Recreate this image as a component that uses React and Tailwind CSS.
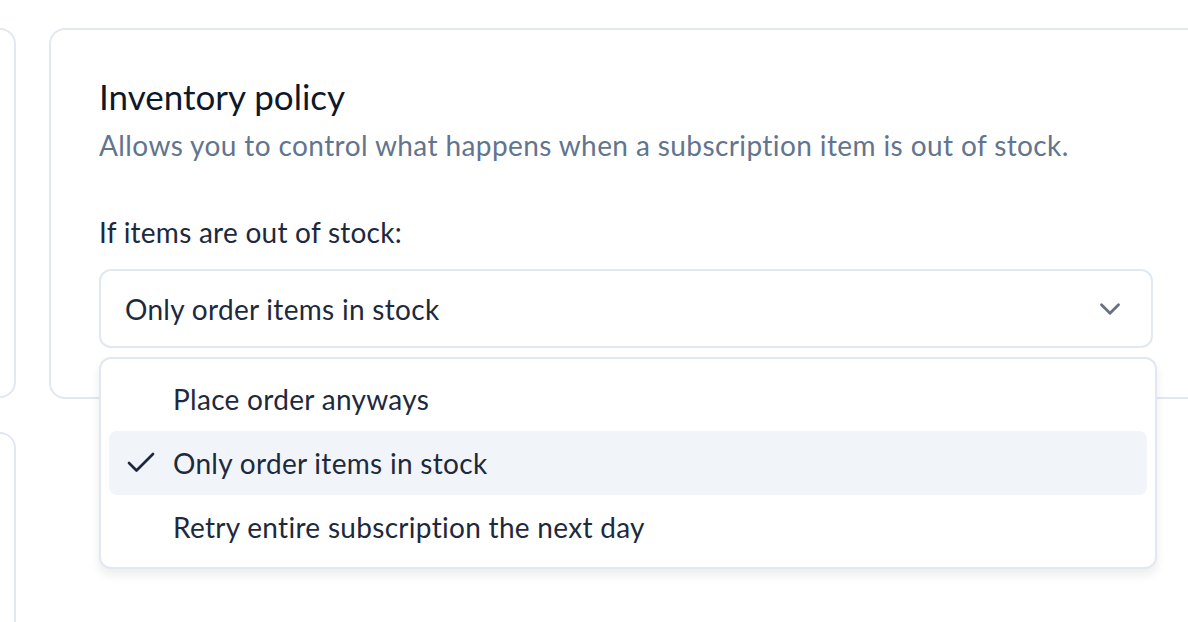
import React from 'react';
import { Check, ChevronDown } from 'lucide-react';

const options = [
  { value: 'place', label: 'Place order anyways' },
  { value: 'only', label: 'Only order items in stock' },
  { value: 'retry', label: 'Retry entire subscription the next day' },
];

export default function App() {
  const selected = 'only';
  const current = options.find(o => o.value === selected);

  return (
    <div className="w-[1188px] h-[622px] overflow-hidden bg-white font-['Lato',sans-serif]">
      <div className="flex items-start gap-[33px] pt-[28px]">
        {/* Left column, mostly off-screen */}
        <div className="w-[300px] -ml-[284px] shrink-0 flex flex-col gap-[34px]">
          <div className="h-[370px] rounded-[16px] border-2 border-slate-200" />
          <div className="h-[300px] rounded-[16px] border-2 border-slate-200" />
        </div>

        {/* Inventory policy card */}
        <div className="w-[1200px] shrink-0 rounded-[16px] border-2 border-slate-200 pl-[48px] pr-[40px] pt-[46px] pb-[49px]">
          <div className="w-[1054px]">
            <h2 className="text-[35px] leading-[40px] text-slate-900">Inventory policy</h2>
            <p className="mt-[9px] text-[28px] leading-[40px] tracking-[0.4px] text-slate-500">
              Allows you to control what happens when a subscription item is out of stock.
            </p>

            <label className="block mt-[47px] text-[28px] leading-[40px] tracking-[0.25px] text-slate-800">If items are out of stock:</label>

            <div className="relative mt-[17px]">
              <button className="w-full h-[79px] flex items-center justify-between rounded-[12px] border-2 border-slate-200 bg-white pl-[24px] pr-[24px] text-left">
                <span className="text-[28px] tracking-[0.3px] text-slate-800">{current.label}</span>
                <ChevronDown className="w-[34px] h-[34px] text-gray-500" strokeWidth={2} />
              </button>

              <div className="absolute left-0 top-[88px] w-[1058px] rounded-[12px] border-2 border-slate-200 bg-white px-[8px] py-[8px] shadow-[0_6px_10px_rgba(15,23,42,0.08)]">
                {options.map(o => (
                  <div
                    key={o.value}
                    className={`flex items-center h-[64px] rounded-[8px] ${o.value === selected ? 'bg-slate-100' : ''}`}
                  >
                    <div className="w-[64px] flex justify-center">
                      {o.value === selected && <Check className="w-[36px] h-[36px] text-slate-800" strokeWidth={1.8} />}
                    </div>
                    <span className="text-[28px] tracking-[0.3px] text-slate-800">{o.label}</span>
                  </div>
                ))}
              </div>
            </div>
          </div>
        </div>
      </div>
    </div>
  );
}
